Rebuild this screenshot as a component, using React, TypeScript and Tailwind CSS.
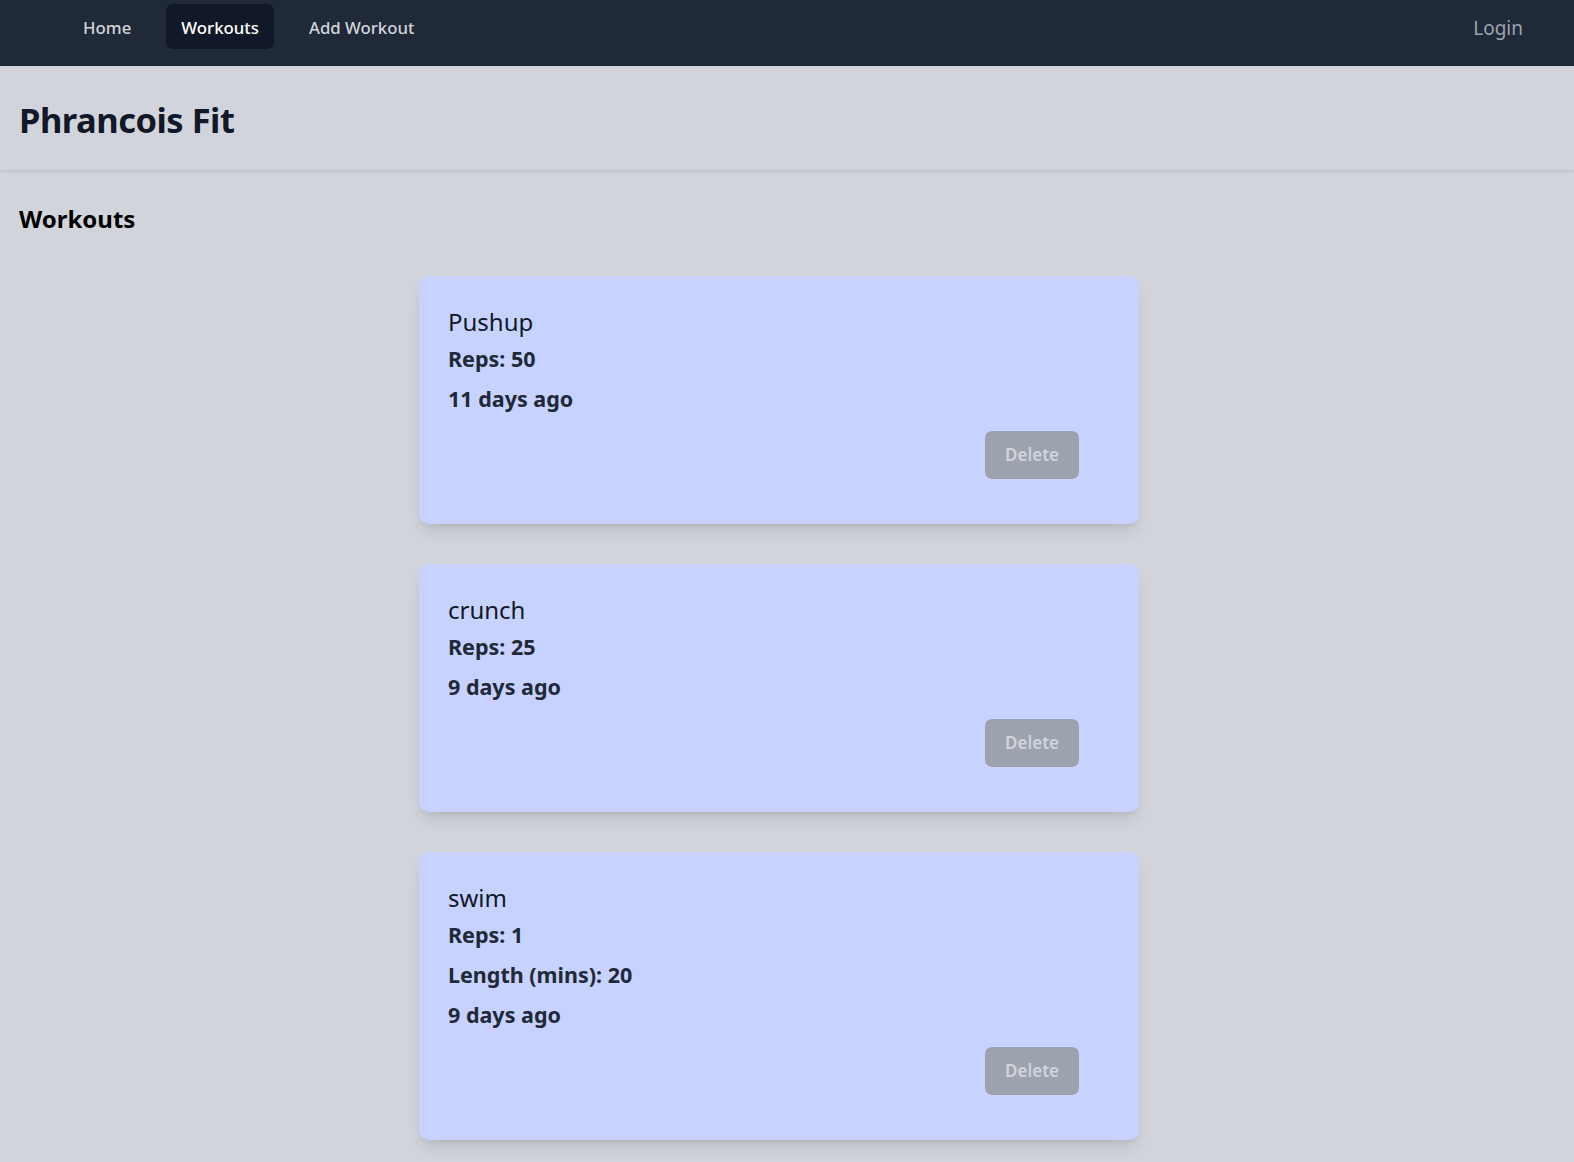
import React from 'react';

type Workout = {
  id: number;
  title: string;
  reps: number;
  length?: number;
  ago: string;
};

const workouts: Workout[] = [
  { id: 1, title: 'Pushup', reps: 50, ago: '11 days ago' },
  { id: 2, title: 'crunch', reps: 25, ago: '9 days ago' },
  { id: 3, title: 'swim', reps: 1, length: 20, ago: '9 days ago' },
];

const font = { fontFamily: '"Noto Sans", "Open Sans", sans-serif' };

const NavBar: React.FC = () => (
  <nav className="h-[66px] bg-[#1f2937] flex items-start justify-between pt-[4px] pl-[68px] pr-[36px]">
    <div className="flex gap-[20px]">
      <a className="px-[15px] pt-[3px] h-[45px] flex items-center rounded-[7px] text-[16.8px] font-medium text-[#d1d5db]">Home</a>
      <a className="px-[15px] pt-[3px] h-[45px] flex items-center rounded-[7px] text-[16.8px] font-medium text-white bg-[#111827]">Workouts</a>
      <a className="px-[15px] pt-[3px] h-[45px] flex items-center rounded-[7px] text-[16.8px] font-medium text-[#d1d5db]">Add Workout</a>
    </div>
    <a className="px-[15px] pt-[3px] h-[45px] flex items-center text-[19px] text-[#9ca3af]">Login</a>
  </nav>
);

const WorkoutCard: React.FC<{ w: Workout }> = ({ w }) => (
  <div className="bg-[#c7d2fe] rounded-[10px] shadow-[0_10px_15px_-3px_rgba(0,0,0,0.1),0_4px_6px_-4px_rgba(0,0,0,0.1)] pt-[28px] pb-[45px] px-[29px] flex flex-col">
    <h3 className="text-[24px] leading-[35px] text-[#111827]">{w.title}</h3>
    <p className="mt-[5px] text-[21.5px] leading-[30px] font-bold text-[#1f2937]">Reps: {w.reps}</p>
    {w.length !== undefined && (
      <p className="mt-[10px] text-[21.5px] leading-[30px] font-bold text-[#1f2937]">Length (mins): {w.length}</p>
    )}
    <p className="mt-[10px] text-[21.5px] leading-[30px] font-bold text-[#1f2937]">{w.ago}</p>
    <div className="mt-[17px] flex justify-end pr-[31px]">
      <button
        disabled
        className="w-[94px] h-[48px] rounded-[7px] bg-[#9ca3af] text-[#d1d5db] text-[17px] font-semibold"
      >
        Delete
      </button>
    </div>
  </div>
);

export default function App() {
  return (
    <div className="min-h-screen bg-[#d1d5db]" style={font}>
      <NavBar />
      <header className="h-[105px] flex items-center px-[19px] border-b border-[#c2c6cc] shadow-[0_1px_3px_rgba(0,0,0,0.08)]">
        <h1 className="text-[34.5px] font-bold text-[#111827] tracking-[-0.5px] mt-[3px]">Phrancois Fit</h1>
      </header>
      <main className="px-[19px] pt-[30px] pb-[30px]">
        <h2 className="text-[24px] font-bold text-black leading-[36px]">Workouts</h2>
        <div className="ml-[400px] w-[720px] mt-[39px] flex flex-col gap-[40px]">
          {workouts.map((w) => (
            <WorkoutCard key={w.id} w={w} />
          ))}
        </div>
      </main>
    </div>
  );
}
